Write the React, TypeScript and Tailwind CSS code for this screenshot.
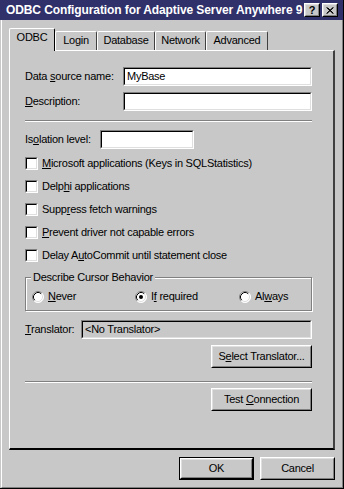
import React from "react";

const bg = "bg-[#c8c8c8]";

function Sunken({
  className = "",
  inner = "bg-white",
  children,
}: {
  className?: string;
  inner?: string;
  children?: React.ReactNode;
}) {
  return (
    <div
      className={`border border-t-[#808080] border-l-[#808080] border-b-white border-r-white ${className}`}
    >
      <div
        className={`h-full w-full border border-t-black border-l-black border-b-[#dfdfdf] border-r-[#dfdfdf] ${inner}`}
      >
        {children}
      </div>
    </div>
  );
}

function Raised({
  className = "",
  children,
}: {
  className?: string;
  children?: React.ReactNode;
}) {
  return (
    <div
      className={`border border-t-white border-l-white border-b-black border-r-black ${className}`}
    >
      <div className="h-full w-full border border-t-[#dfdfdf] border-l-[#dfdfdf] border-b-[#808080] border-r-[#808080] flex items-center justify-center">
        <span>{children}</span>
      </div>
    </div>
  );
}

function Etched() {
  return <div className="h-[2px] w-full border-t border-t-[#808080] border-b border-b-white" />;
}

function Checkbox({ children }: { children: React.ReactNode }) {
  return (
    <div className="flex items-center gap-[4px] h-[13px]">
      <Sunken className="w-[13px] h-[13px] shrink-0" />
      <span>{children}</span>
    </div>
  );
}

function Radio({ checked, children }: { checked?: boolean; children: React.ReactNode }) {
  return (
    <div className="flex items-center gap-[4px]">
      <svg width="12" height="12" viewBox="0 0 12 12" className="shrink-0">
        <circle cx="6" cy="6" r="5.5" fill="white" />
        <path d="M2.11 9.89 A5.5 5.5 0 0 1 9.89 2.11" stroke="#808080" fill="none" />
        <path d="M9.89 2.11 A5.5 5.5 0 0 1 2.11 9.89" stroke="#ffffff" fill="none" />
        <path d="M2.82 9.18 A4.5 4.5 0 0 1 9.18 2.82" stroke="#000000" fill="none" />
        <path d="M9.18 2.82 A4.5 4.5 0 0 1 2.82 9.18" stroke="#dfdfdf" fill="none" />
        {checked && <circle cx="6" cy="6" r="2" fill="black" />}
      </svg>
      <span>{children}</span>
    </div>
  );
}

export default function App() {
  const tabs = [
    { name: "Login", w: "w-[42px]" },
    { name: "Database", w: "w-[58px]" },
    { name: "Network", w: "w-[51px]" },
    { name: "Advanced", w: "w-[62px]" },
  ];

  return (
    <div
      className={`w-[344px] h-[489px] ${bg} flex flex-col text-black text-[11px] leading-[13px] tracking-[-0.25px] font-['Liberation_Sans',Arial,sans-serif] border-r border-b border-black select-none`}
    >
      {/* title bar */}
      <div className="h-[20px] shrink-0 bg-[#30306a] flex items-center pl-[6px] pr-[5px]">
        <span className="text-white font-bold text-[12px] tracking-[-0.1px] leading-none whitespace-nowrap">
          ODBC Configuration for Adaptive Server Anywhere 9
        </span>
        <div className="ml-auto flex gap-[2px]">
          <Raised className={`w-[16px] h-[14px] ${bg}`}>
            <span className="font-bold text-[11px] leading-none tracking-normal">?</span>
          </Raised>
          <Raised className={`w-[16px] h-[14px] ${bg}`}>
            <svg width="8" height="7" viewBox="0 0 8 7" className="block">
              <path d="M0.5 0.5 L7 6.5 M1.5 0.5 L7.5 6.5 M7 0.5 L0.5 6.5 M7.5 0.5 L1 6.5" stroke="black" strokeWidth="1" />
            </svg>
          </Raised>
        </div>
      </div>

      {/* body */}
      <div className="flex-1 flex flex-col ml-px border-l border-white border-b border-b-[#808080] border-r border-r-[#808080] pt-[8px] pl-[7px] pr-[7px]">
        {/* tabs */}
        <div className="flex items-end h-[22px]">
          <div
            className={`relative z-10 w-[46px] h-[23px] -mb-px ${bg} border-t border-l border-white border-r border-r-black rounded-t-[2px] flex justify-center pt-[2px]`}
          >
            ODBC
          </div>
          {tabs.map((t) => (
            <div
              key={t.name}
              className={`${t.w} h-[19px] border-t border-l border-white border-r border-r-[#404040] rounded-t-[2px] flex justify-center pt-[2px]`}
            >
              {t.name}
            </div>
          ))}
        </div>

        {/* panel */}
        <div className="h-[400px] border-t border-l border-white border-r-2 border-r-[#404040] border-b-2 border-b-black">
          <div className="h-full flex flex-col pl-[15px] pt-[16px] w-[302px]">
            <div className="flex items-center h-[19px]">
              <span className="w-[98px] shrink-0">
                Data <u>s</u>ource name:
              </span>
              <Sunken className="w-[189px] h-[19px]">
                <div className="pl-[2px] leading-[15px]">MyBase</div>
              </Sunken>
            </div>
            <div className="flex items-center h-[19px] mt-[6px]">
              <span className="w-[98px] shrink-0">
                <u>D</u>escription:
              </span>
              <Sunken className="w-[189px] h-[19px]" />
            </div>
            <div className="mt-[9px]">
              <Etched />
            </div>
            <div className="flex items-center h-[19px] mt-[8px]">
              <span className="w-[75px] shrink-0">
                Is<u>o</u>lation level:
              </span>
              <Sunken className="w-[94px] h-[19px]" />
            </div>

            <div className="flex flex-col gap-[10px] mt-[8px]">
              <Checkbox>
                <u>M</u>icrosoft applications (Keys in SQLStatistics)
              </Checkbox>
              <Checkbox>
                Delp<u>h</u>i applications
              </Checkbox>
              <Checkbox>
                Supp<u>r</u>ess fetch warnings
              </Checkbox>
              <Checkbox>
                <u>P</u>revent driver not capable errors
              </Checkbox>
              <Checkbox>
                Delay A<u>u</u>toCommit until statement close
              </Checkbox>
            </div>

            {/* group box */}
            <div className="relative mt-[15px] h-[34px] border border-[#808080] shadow-[inset_1px_1px_0_#ffffff,1px_1px_0_#ffffff] pt-[12px] pl-[6px] flex">
              <span className={`absolute -top-[7px] left-[5px] px-[2px] ${bg}`}>
                Describe Cursor Behavior
              </span>
              <div className="w-[103px]">
                <Radio>
                  <u>N</u>ever
                </Radio>
              </div>
              <div className="w-[104px]">
                <Radio checked>
                  I<u>f</u> required
                </Radio>
              </div>
              <div>
                <Radio>
                  Al<u>w</u>ays
                </Radio>
              </div>
            </div>

            <div className="flex items-center h-[19px] mt-[9px]">
              <span className="w-[56px] shrink-0">
                <u>T</u>ranslator:
              </span>
              <Sunken className="w-[231px] h-[19px]" inner={bg}>
                <div className="pl-[2px] leading-[15px]">&lt;No Translator&gt;</div>
              </Sunken>
            </div>
            <div className="flex justify-end mt-[6px]">
              <Raised className="w-[101px] h-[23px]">
                S<u>e</u>lect Translator...
              </Raised>
            </div>
            <div className="mt-[13px]">
              <Etched />
            </div>
            <div className="flex justify-end mt-[5px]">
              <Raised className="w-[101px] h-[23px]">
                Test <u>C</u>onnection
              </Raised>
            </div>
          </div>
        </div>

        {/* dialog buttons */}
        <div className="flex justify-end gap-[6px] mt-[7px]">
          <div className="border border-black">
            <Raised className="w-[73px] h-[21px]">OK</Raised>
          </div>
          <Raised className="w-[75px] h-[23px]">Cancel</Raised>
        </div>
      </div>
    </div>
  );
}
